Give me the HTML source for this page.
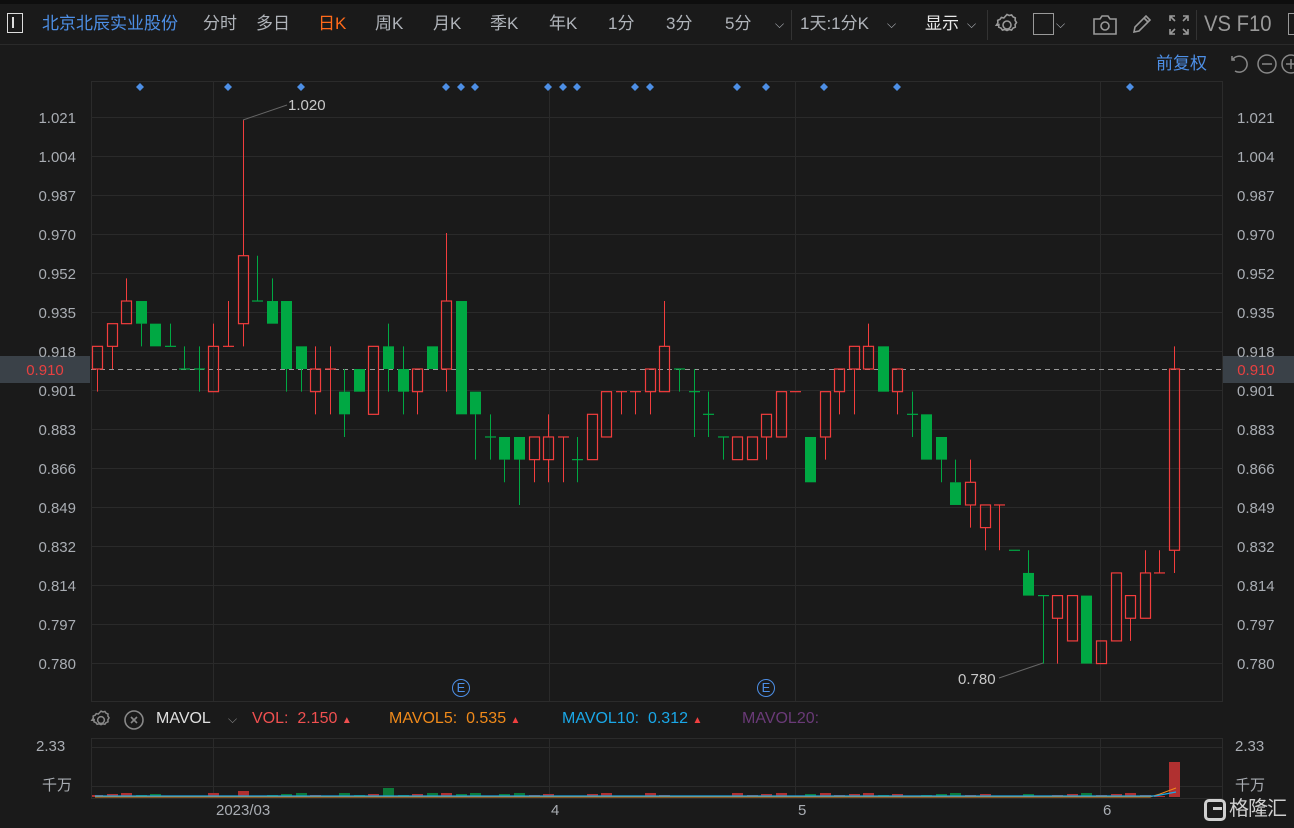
<!DOCTYPE html>
<html><head><meta charset="utf-8">
<style>
html,body{margin:0;padding:0;background:#1a1a1a;width:1294px;height:828px;overflow:hidden;font-family:"Liberation Sans","Noto Sans CJK SC",sans-serif;}
#wrap{position:relative;width:1294px;height:828px;}
.t{position:absolute;white-space:nowrap;line-height:1;}
.tb{font-size:17px;color:#b0b4ba;top:15px;}
</style></head><body><div id="wrap">
<div style="position:absolute;left:0;top:0;width:1294px;height:4px;background:#0e0e0e"></div>
<div style="position:absolute;left:0;top:44px;width:1294px;height:1px;background:#2a2a2a"></div>
<div style="position:absolute;left:7px;top:13px;width:14px;height:18px;border:1.5px solid #ddd;"></div>
<div style="position:absolute;left:12px;top:17px;width:1.5px;height:11px;background:#ddd"></div>
<div class="t tb" style="left:42px;color:#4d8fe6">北京北辰实业股份</div>
<div class="t tb" style="left:203px">分时</div>
<div class="t tb" style="left:256px">多日</div>
<div class="t tb" style="left:318px;color:#ff6a1a">日K</div>
<div class="t tb" style="left:375px">周K</div>
<div class="t tb" style="left:433px">月K</div>
<div class="t tb" style="left:490px">季K</div>
<div class="t tb" style="left:549px">年K</div>
<div class="t tb" style="left:608px">1分</div>
<div class="t tb" style="left:666px">3分</div>
<div class="t tb" style="left:725px">5分</div>
<div class="t tb" style="left:775px;font-size:12px;top:18px">⌵</div>
<div style="position:absolute;left:791px;top:10px;width:1px;height:30px;background:#333"></div>
<div class="t tb" style="left:800px">1天:1分K</div>
<div class="t tb" style="left:887px;font-size:12px;top:18px">⌵</div>
<div class="t tb" style="left:925px;color:#e8e8e8">显示</div>
<div class="t tb" style="left:967px;font-size:12px;top:18px">⌵</div>
<div style="position:absolute;left:987px;top:10px;width:1px;height:30px;background:#333"></div>
<svg style="position:absolute;left:994px;top:12px" width="26" height="26" viewBox="0 0 26 26" fill="none" stroke="#999" stroke-width="1.6"><path d="M13 2.5l2.2 1 2.4-.6 1.4 2 2.3 1-.2 2.5 1.4 2.1-1.4 2.1.2 2.5-2.3 1-1.4 2-2.4-.6-2.2 1-2.2-1-2.4.6-1.4-2-2.3-1 .2-2.5L2.5 13l1.4-2.1-.2-2.5 2.3-1 1.4-2 2.4.6z"/><circle cx="13" cy="13" r="4"/></svg>
<div style="position:absolute;left:1033px;top:13px;width:19px;height:20px;border:1.5px solid #999"></div>
<div class="t tb" style="left:1056px;font-size:12px;top:18px">⌵</div>
<svg style="position:absolute;left:1092px;top:14px" width="26" height="22" viewBox="0 0 26 22" fill="none" stroke="#999" stroke-width="1.6"><path d="M2 5h6l2-3h6l2 3h6v15H2z"/><circle cx="13" cy="12" r="4"/></svg>
<svg style="position:absolute;left:1130px;top:12px" width="24" height="24" viewBox="0 0 24 24" fill="none" stroke="#999" stroke-width="1.6"><path d="M4 20l1-5L16 4l4 4L9 19zM14 6l4 4"/></svg>
<svg style="position:absolute;left:1168px;top:14px" width="22" height="22" viewBox="0 0 22 22" fill="none" stroke="#999" stroke-width="1.6"><path d="M2 7V2h5M2 2l5 5M15 2h5v5M20 2l-5 5M2 15v5h5M2 20l5-5M20 15v5h-5M20 20l-5-5"/></svg>
<div style="position:absolute;left:1196px;top:10px;width:1px;height:30px;background:#333"></div>
<div class="t" style="left:1204px;top:13px;font-size:22px;color:#999;transform:scaleX(0.92);transform-origin:left">VS F10</div>
<div style="position:absolute;left:1288px;top:13px;width:10px;height:20px;border:1.5px solid #999"></div>
<div class="t" style="left:1156px;top:55px;font-size:17px;color:#4d8fe6">前复权</div>
<svg style="position:absolute;left:1228px;top:52px" width="66" height="24" viewBox="0 0 66 24" fill="none" stroke="#888" stroke-width="1.5"><path d="M4 4v4h3M5 7a8 8 0 1 1 2 12"/><circle cx="39" cy="12" r="9"/><path d="M34 12h10"/><circle cx="63" cy="12" r="9"/><path d="M58 12h10M63 7v10"/></svg>
<div style="position:absolute;left:0;top:356px;width:90px;height:27px;background:#3a4148"></div>
<div style="position:absolute;left:1223px;top:356px;width:71px;height:27px;background:#3a4148"></div>
<svg id="chart" style="position:absolute;left:0;top:0" width="1294" height="828"></svg>
<div style="position:absolute;left:452px;top:679px;width:16px;height:16px;border:1.5px solid #4d8fe6;border-radius:50%;color:#4d8fe6;font-size:13px;text-align:center;line-height:16px">E</div>
<div style="position:absolute;left:757px;top:679px;width:16px;height:16px;border:1.5px solid #4d8fe6;border-radius:50%;color:#4d8fe6;font-size:13px;text-align:center;line-height:16px">E</div>
<svg style="position:absolute;left:90px;top:709px" width="22" height="22" viewBox="0 0 26 26" fill="none" stroke="#888" stroke-width="1.8"><path d="M13 2.5l2.2 1 2.4-.6 1.4 2 2.3 1-.2 2.5 1.4 2.1-1.4 2.1.2 2.5-2.3 1-1.4 2-2.4-.6-2.2 1-2.2-1-2.4.6-1.4-2-2.3-1 .2-2.5L2.5 13l1.4-2.1-.2-2.5 2.3-1 1.4-2 2.4.6z"/><circle cx="13" cy="13" r="4"/></svg>
<svg style="position:absolute;left:123px;top:709px" width="22" height="22" viewBox="0 0 22 22" fill="none" stroke="#888" stroke-width="1.6"><circle cx="11" cy="11" r="9"/><path d="M8 8l6 6M14 8l-6 6"/></svg>
<div class="t" style="left:156px;top:711px;font-size:16px;color:#e0e0e0">MAVOL</div>
<div class="t" style="left:228px;top:713px;font-size:12px;color:#888">⌵</div>
<div class="t" style="left:252px;top:711px;font-size:16px;color:#f05050">VOL: &nbsp;2.150 <span style="font-size:10px">▲</span></div>
<div class="t" style="left:389px;top:711px;font-size:16px;color:#f08a1a">MAVOL5: &nbsp;0.535 <span style="font-size:10px;color:#f04040">▲</span></div>
<div class="t" style="left:562px;top:711px;font-size:16px;color:#1aa8e8">MAVOL10: &nbsp;0.312 <span style="font-size:10px;color:#f04040">▲</span></div>
<div class="t" style="left:742px;top:711px;font-size:16px;color:#6a3a78">MAVOL20:</div>
<div class="t" style="left:36px;top:739px;font-size:15px;color:#a9adb3">2.33</div>
<div class="t" style="left:42px;top:778px;font-size:15px;color:#a9adb3">千万</div>
<div class="t" style="left:1235px;top:739px;font-size:15px;color:#a9adb3">2.33</div>
<div class="t" style="left:1235px;top:778px;font-size:15px;color:#a9adb3">千万</div>
<div class="t" style="left:216px;top:803px;font-size:15px;color:#a9adb3">2023/03</div>
<div class="t" style="left:551px;top:803px;font-size:15px;color:#a9adb3">4</div>
<div class="t" style="left:798px;top:803px;font-size:15px;color:#a9adb3">5</div>
<div class="t" style="left:1103px;top:803px;font-size:15px;color:#a9adb3">6</div>
<div style="position:absolute;left:1204px;top:799px;width:22px;height:22px;border:3px solid #cfcfcf;border-radius:5px;box-sizing:border-box"></div>
<div style="position:absolute;left:1213px;top:807px;width:9px;height:3px;background:#cfcfcf"></div>
<div class="t" style="left:1229px;top:799px;font-size:20px;color:#cfcfcf;letter-spacing:-1px">格隆汇</div>
<script>
var s='';
function Y(L){return 369-(L-91)*22.66;}
var lv=[[1.021,117],[1.004,156],[0.987,195],[0.970,234],[0.952,273],[0.935,312],[0.918,351],[0.901,390],[0.883,429],[0.866,468],[0.849,507],[0.832,546],[0.814,585],[0.797,624],[0.780,663]];
s+='<rect x="91.5" y="81.5" width="1131" height="620" fill="none" stroke="#2b2b2b"/>';
lv.forEach(function(a){s+='<line x1="91" x2="1222" y1="'+(a[1]+.5)+'" y2="'+(a[1]+.5)+'" stroke="#2a2a2a"/>';
 s+='<text x="76" y="'+(a[1]+6)+'" text-anchor="end" font-size="15" fill="#a9adb3">'+a[0].toFixed(3)+'</text>';
 s+='<text x="1237" y="'+(a[1]+6)+'" font-size="15" fill="#a9adb3">'+a[0].toFixed(3)+'</text>';});
[213,549,795,1100].forEach(function(x){s+='<line x1="'+(x+.5)+'" x2="'+(x+.5)+'" y1="81" y2="701" stroke="#2a2a2a"/><line x1="'+(x+.5)+'" x2="'+(x+.5)+'" y1="738" y2="797" stroke="#2a2a2a"/>';});
s+='<rect x="91.5" y="738.5" width="1131" height="60" fill="none" stroke="#2b2b2b"/>';
s+='<line x1="91" x2="1222" y1="747.5" y2="747.5" stroke="#2a2a2a"/><line x1="91" x2="1222" y1="786.5" y2="786.5" stroke="#2a2a2a"/>';
s+='<text x="45" y="375" text-anchor="middle" font-size="15" fill="#e84040">0.910</text>';
s+='<text x="1256" y="375" text-anchor="middle" font-size="15" fill="#e84040">0.910</text>';
s+='<line x1="91" x2="1222" y1="369.5" y2="369.5" stroke="#999" stroke-dasharray="5,4" stroke-width="1"/>';
[140,228,301,446,461,475,548,563,577,635,650,737,766,824,897,1130].forEach(function(x){s+='<path d="M'+x+' 83l4 4-4 4-4-4z" fill="#4d8fe6"/>';});
var d=[[91,92,92,90],[92,93,93,91],[93,94,95,93],[94,93,94,92],[93,92,93,92],[92,92,93,92],[91,91,92,91],[91,91,92,90],[90,92,93,90],[92,92,94,92],
[93,96,102,92],[94,94,96,94],[94,93,95,93],[94,91,94,90],[92,91,92,90],[90,91,92,89],[91,91,92,89],[90,89,91,88],[91,90,91,90],[89,92,92,89],
[92,91,93,90],[91,90,92,89],[90,91,91,89],[92,91,92,91],[91,94,97,90],[94,89,94,89],[90,89,90,87],[88,88,89,87],[88,87,88,86],[88,87,88,85],
[87,88,88,86],[87,88,89,86],[88,88,88,86],[87,87,88,86],[87,89,89,87],[88,90,90,88],[90,90,90,89],[90,90,90,89],[90,91,91,89],[90,92,94,90],
[91,91,91,90],[90,90,91,88],[89,89,90,88],[88,88,88,87],[87,88,88,87],[87,88,88,87],[88,89,89,87],[88,90,90,88],[90,90,90,90],[88,86,88,86],
[88,90,90,87],[90,91,91,89],[91,92,92,89],[91,92,93,91],[92,90,92,90],[90,91,91,89],[89,89,90,88],[89,87,89,87],[88,87,88,86],[86,85,87,85],
[85,86,87,84],[84,85,85,83],[85,85,85,83],[83,83,83,83],[82,81,83,81],[81,81,81,78],[80,81,81,78],[79,81,81,79],[81,78,81,78],[78,79,79,78],
[79,82,82,79],[80,81,81,79],[80,82,83,80],[82,82,83,82],[83,91,92,82]];
var R='#f23d3d',G='#00a843';
d.forEach(function(c,i){var x=Math.round(97+i*14.55);var o=c[0],cl=c[1],h=c[2],l=c[3];
 var up=cl>o||(cl==o&&(i==9||i==16||i==22||i==32||i>=35&&i<=39||i==48||i==62||i==73));
 var col=up?R:G;
 var top=Y(Math.max(o,cl)),bot=Y(Math.min(o,cl));
 s+='<line x1="'+(x+.5)+'" x2="'+(x+.5)+'" y1="'+Y(h)+'" y2="'+top+'" stroke="'+col+'" stroke-width="1"/>';
 s+='<line x1="'+(x+.5)+'" x2="'+(x+.5)+'" y1="'+bot+'" y2="'+Y(l)+'" stroke="'+col+'" stroke-width="1"/>';
 if(o==cl){s+='<line x1="'+(x-5)+'" x2="'+(x+6)+'" y1="'+top+'" y2="'+top+'" stroke="'+col+'" stroke-width="1.2"/>';}
 else if(up){s+='<rect x="'+(x-4.5)+'" y="'+top+'" width="10" height="'+(bot-top)+'" fill="none" stroke="'+col+'" stroke-width="1.2"/>';}
 else{s+='<rect x="'+(x-5)+'" y="'+top+'" width="11" height="'+(bot-top)+'" fill="'+col+'"/>';}
 var vh=(i==74)?35:(i==10?6:(i==20?9:(i==24?4:(Math.abs(o-cl)>0?2+((i*7)%3):1))));
 s+='<rect x="'+(x-5)+'" y="'+(797-vh)+'" width="11" height="'+vh+'" fill="'+(up?'#b03030':'#0d7a3a')+'"/>';
});
s+='<polyline points="95,797 1150,797 1160,794 1176,788" fill="none" stroke="#f08a1a" stroke-width="1"/>';
s+='<polyline points="95,796 1155,796 1176,792" fill="none" stroke="#1aa8e8" stroke-width="1.2"/>';
s+='<line x1="243" y1="120" x2="287" y2="105" stroke="#666"/><text x="288" y="110" font-size="15" fill="#c8c8c8">1.020</text>';
s+='<line x1="1043" y1="663" x2="999" y2="678" stroke="#666"/><text x="958" y="684" font-size="15" fill="#c8c8c8">0.780</text>';
document.getElementById('chart').innerHTML=s;
</script>
</div></body></html>
